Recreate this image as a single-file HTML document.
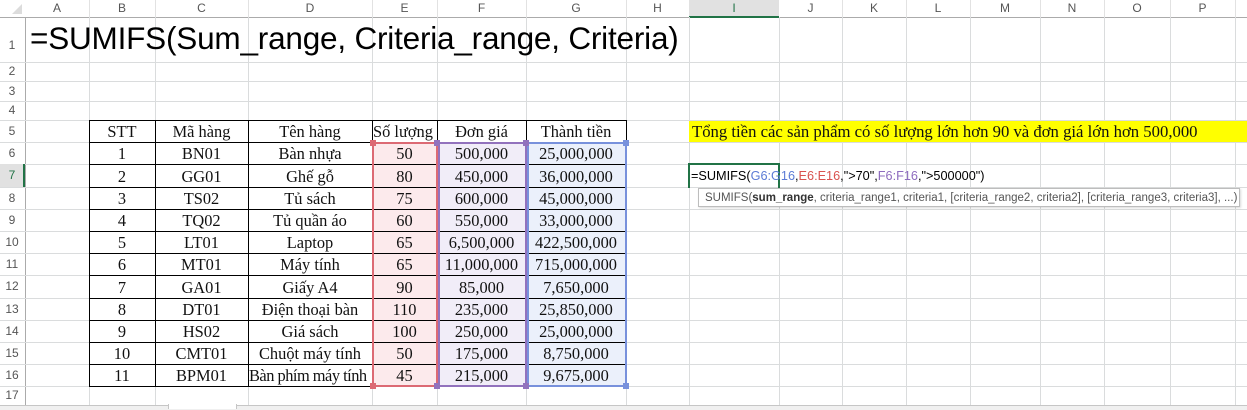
<!DOCTYPE html>
<html><head><meta charset="utf-8"><style>
body{margin:0;width:1247px;height:409px;overflow:hidden;background:#fff;position:relative;font-family:"Liberation Sans",sans-serif}
.v{position:absolute;top:17px;height:388px;width:1px;background:#dadcdd}
.h{position:absolute;left:0;width:1247px;height:1px;background:#dadcdd}
.ch{position:absolute;top:0;height:17px;line-height:17px;text-align:center;font-size:12px;color:#555}
.rh{position:absolute;left:0;width:24px;text-align:center;font-size:12px;color:#555}
.c{position:absolute;text-align:center;font-family:"Liberation Serif",serif;font-size:16.4px;color:#111;white-space:nowrap;overflow:hidden}
.box{position:absolute;box-sizing:border-box}
.hd{position:absolute;width:6px;height:6px}
</style></head><body>
<div style="position:absolute;left:0;top:0;width:1247px;height:17px;background:#fff;border-bottom:1px solid #ababab"></div>
<div style="position:absolute;left:689px;top:0;width:90px;height:16px;background:#e1e1e1;border-bottom:2px solid #217346"></div>
<svg style="position:absolute;left:12px;top:4px" width="11" height="11"><polygon points="10,0 10,10 0,10" fill="#dcdcdc"/></svg>
<div class="v" style="left:25px;background:#ababab"></div>
<div class="v" style="left:89px"></div><div class="v" style="left:155px"></div><div class="v" style="left:248px"></div><div class="v" style="left:372px"></div><div class="v" style="left:437px"></div><div class="v" style="left:526px"></div><div class="v" style="left:626px"></div><div class="v" style="left:689px"></div><div class="v" style="left:779px"></div><div class="v" style="left:842px"></div><div class="v" style="left:906px"></div><div class="v" style="left:970px"></div><div class="v" style="left:1040px"></div><div class="v" style="left:1104px"></div><div class="v" style="left:1170px"></div><div class="v" style="left:1235px"></div>
<div style="position:absolute;top:0;height:17px;left:89px;width:1px;background:#e2e2e2"></div>
<div style="position:absolute;top:0;height:17px;left:155px;width:1px;background:#e2e2e2"></div>
<div style="position:absolute;top:0;height:17px;left:248px;width:1px;background:#e2e2e2"></div>
<div style="position:absolute;top:0;height:17px;left:372px;width:1px;background:#e2e2e2"></div>
<div style="position:absolute;top:0;height:17px;left:437px;width:1px;background:#e2e2e2"></div>
<div style="position:absolute;top:0;height:17px;left:526px;width:1px;background:#e2e2e2"></div>
<div style="position:absolute;top:0;height:17px;left:626px;width:1px;background:#e2e2e2"></div>
<div style="position:absolute;top:0;height:17px;left:842px;width:1px;background:#e2e2e2"></div>
<div style="position:absolute;top:0;height:17px;left:906px;width:1px;background:#e2e2e2"></div>
<div style="position:absolute;top:0;height:17px;left:970px;width:1px;background:#e2e2e2"></div>
<div style="position:absolute;top:0;height:17px;left:1040px;width:1px;background:#e2e2e2"></div>
<div style="position:absolute;top:0;height:17px;left:1104px;width:1px;background:#e2e2e2"></div>
<div style="position:absolute;top:0;height:17px;left:1170px;width:1px;background:#e2e2e2"></div>
<div style="position:absolute;top:0;height:17px;left:1235px;width:1px;background:#e2e2e2"></div>
<div class="h" style="top:62px"></div><div class="h" style="top:81px"></div><div class="h" style="top:101px"></div><div class="h" style="top:120px"></div><div class="h" style="top:142px"></div><div class="h" style="top:164px"></div><div class="h" style="top:187px"></div><div class="h" style="top:209px"></div><div class="h" style="top:231px"></div><div class="h" style="top:253px"></div><div class="h" style="top:275px"></div><div class="h" style="top:298px"></div><div class="h" style="top:320px"></div><div class="h" style="top:342px"></div><div class="h" style="top:364px"></div><div class="h" style="top:386px"></div>
<div class="ch" style="left:25px;width:64px">A</div><div class="ch" style="left:89px;width:66px">B</div><div class="ch" style="left:155px;width:93px">C</div><div class="ch" style="left:248px;width:124px">D</div><div class="ch" style="left:372px;width:65px">E</div><div class="ch" style="left:437px;width:89px">F</div><div class="ch" style="left:526px;width:100px">G</div><div class="ch" style="left:626px;width:63px">H</div><div class="ch" style="left:689px;width:90px;color:#217346">I</div><div class="ch" style="left:779px;width:63px">J</div><div class="ch" style="left:842px;width:64px">K</div><div class="ch" style="left:906px;width:64px">L</div><div class="ch" style="left:970px;width:70px">M</div><div class="ch" style="left:1040px;width:64px">N</div><div class="ch" style="left:1104px;width:66px">O</div><div class="ch" style="left:1170px;width:65px">P</div>
<div class="rh" style="top:17px;height:45px;line-height:56px">1</div>
<div class="rh" style="top:62px;line-height:19px">2</div>
<div class="rh" style="top:81px;line-height:20px">3</div>
<div class="rh" style="top:101px;line-height:19px">4</div>
<div class="rh" style="top:120px;line-height:22px">5</div>
<div class="rh" style="top:142px;line-height:22px">6</div>
<div style="position:absolute;left:0;top:164px;width:25px;height:23px;background:#e1e1e1;border-right:2px solid #217346;box-sizing:border-box"></div>
<div class="rh" style="top:164px;line-height:23px;color:#217346">7</div>
<div class="rh" style="top:187px;line-height:22px">8</div>
<div class="rh" style="top:209px;line-height:22px">9</div>
<div class="rh" style="top:231px;line-height:22px">10</div>
<div class="rh" style="top:253px;line-height:22px">11</div>
<div class="rh" style="top:275px;line-height:23px">12</div>
<div class="rh" style="top:298px;line-height:22px">13</div>
<div class="rh" style="top:320px;line-height:22px">14</div>
<div class="rh" style="top:342px;line-height:22px">15</div>
<div class="rh" style="top:364px;line-height:22px">16</div>
<div class="rh" style="top:386px;line-height:19px">17</div>
<div style="position:absolute;left:30px;top:20px;font-size:31.5px;color:#000;white-space:nowrap;letter-spacing:-0.2px">=SUMIFS(Sum_range, Criteria_range, Criteria)</div>
<div class="box" style="left:372px;top:142px;width:66px;height:245px;background:#fceaec;border:2px solid #dc6a74"></div>
<div class="box" style="left:437px;top:142px;width:90px;height:245px;background:#f1edf8;border:2px solid #9272bd"></div>
<div class="box" style="left:526px;top:142px;width:101px;height:245px;background:#ebf0fb;border:2px solid #7891dc"></div>
<div style="position:absolute;left:89px;top:120px;width:538px;height:1px;background:#000"></div>
<div style="position:absolute;left:89px;top:142px;width:538px;height:1px;background:#000"></div>
<div style="position:absolute;left:89px;top:164px;width:538px;height:1px;background:#000"></div>
<div style="position:absolute;left:89px;top:187px;width:538px;height:1px;background:#000"></div>
<div style="position:absolute;left:89px;top:209px;width:538px;height:1px;background:#000"></div>
<div style="position:absolute;left:89px;top:231px;width:538px;height:1px;background:#000"></div>
<div style="position:absolute;left:89px;top:253px;width:538px;height:1px;background:#000"></div>
<div style="position:absolute;left:89px;top:275px;width:538px;height:1px;background:#000"></div>
<div style="position:absolute;left:89px;top:298px;width:538px;height:1px;background:#000"></div>
<div style="position:absolute;left:89px;top:320px;width:538px;height:1px;background:#000"></div>
<div style="position:absolute;left:89px;top:342px;width:538px;height:1px;background:#000"></div>
<div style="position:absolute;left:89px;top:364px;width:538px;height:1px;background:#000"></div>
<div style="position:absolute;left:89px;top:386px;width:538px;height:1px;background:#000"></div>
<div style="position:absolute;left:89px;top:120px;width:1px;height:267px;background:#000"></div>
<div style="position:absolute;left:155px;top:120px;width:1px;height:267px;background:#000"></div>
<div style="position:absolute;left:248px;top:120px;width:1px;height:267px;background:#000"></div>
<div style="position:absolute;left:372px;top:120px;width:1px;height:23px;background:#000"></div>
<div style="position:absolute;left:437px;top:120px;width:1px;height:23px;background:#000"></div>
<div style="position:absolute;left:526px;top:120px;width:1px;height:23px;background:#000"></div>
<div style="position:absolute;left:626px;top:120px;width:1px;height:23px;background:#000"></div>
<div style="position:absolute;left:372px;top:142px;width:2px;height:245px;background:#dc6a74"></div>
<div style="position:absolute;left:436px;top:142px;width:2px;height:245px;background:#dc6a74"></div>
<div style="position:absolute;left:438px;top:142px;width:2px;height:245px;background:#9272bd"></div>
<div style="position:absolute;left:525px;top:142px;width:2px;height:245px;background:#9272bd"></div>
<div style="position:absolute;left:527px;top:142px;width:2px;height:245px;background:#7891dc"></div>
<div style="position:absolute;left:625px;top:142px;width:2px;height:245px;background:#7891dc"></div>
<div style="position:absolute;left:372px;top:142px;width:66px;height:2px;background:#dc6a74"></div>
<div style="position:absolute;left:372px;top:385px;width:66px;height:2px;background:#dc6a74"></div>
<div style="position:absolute;left:438px;top:142px;width:88px;height:2px;background:#9272bd"></div>
<div style="position:absolute;left:438px;top:385px;width:88px;height:2px;background:#9272bd"></div>
<div style="position:absolute;left:527px;top:142px;width:100px;height:2px;background:#7891dc"></div>
<div style="position:absolute;left:527px;top:385px;width:100px;height:2px;background:#7891dc"></div>
<div class="hd" style="left:370px;top:140px;background:#dc6a74"></div><div class="hd" style="left:434px;top:140px;background:#9272bd"></div><div class="hd" style="left:523px;top:140px;background:#9272bd"></div><div class="hd" style="left:623px;top:140px;background:#7891dc"></div>
<div class="hd" style="left:370px;top:383px;background:#dc6a74"></div><div class="hd" style="left:434px;top:383px;background:#9272bd"></div><div class="hd" style="left:523px;top:383px;background:#9272bd"></div><div class="hd" style="left:623px;top:383px;background:#7891dc"></div>
<div class="c" style="left:89px;top:120px;width:66px;line-height:24px">STT</div>
<div class="c" style="left:155px;top:120px;width:93px;line-height:24px">Mã hàng</div>
<div class="c" style="left:248px;top:120px;width:124px;line-height:24px">Tên hàng</div>
<div class="c" style="left:373px;top:120px;width:64px;line-height:24px;text-align:left">Số lượng</div>
<div class="c" style="left:437px;top:120px;width:89px;line-height:24px">Đơn giá</div>
<div class="c" style="left:526px;top:120px;width:100px;line-height:24px">Thành tiền</div>

<div class="c" style="left:89px;top:142px;width:66px;line-height:24px">1</div><div class="c" style="left:155px;top:142px;width:93px;line-height:24px">BN01</div><div class="c" style="left:248px;top:142px;width:124px;line-height:24px">Bàn nhựa</div><div class="c" style="left:372px;top:142px;width:65px;line-height:24px">50</div><div class="c" style="left:437px;top:142px;width:89px;line-height:24px">500,000</div><div class="c" style="left:526px;top:142px;width:100px;line-height:24px">25,000,000</div>
<div class="c" style="left:89px;top:164px;width:66px;line-height:25px">2</div><div class="c" style="left:155px;top:164px;width:93px;line-height:25px">GG01</div><div class="c" style="left:248px;top:164px;width:124px;line-height:25px">Ghế gỗ</div><div class="c" style="left:372px;top:164px;width:65px;line-height:25px">80</div><div class="c" style="left:437px;top:164px;width:89px;line-height:25px">450,000</div><div class="c" style="left:526px;top:164px;width:100px;line-height:25px">36,000,000</div>
<div class="c" style="left:89px;top:187px;width:66px;line-height:24px">3</div><div class="c" style="left:155px;top:187px;width:93px;line-height:24px">TS02</div><div class="c" style="left:248px;top:187px;width:124px;line-height:24px">Tủ sách</div><div class="c" style="left:372px;top:187px;width:65px;line-height:24px">75</div><div class="c" style="left:437px;top:187px;width:89px;line-height:24px">600,000</div><div class="c" style="left:526px;top:187px;width:100px;line-height:24px">45,000,000</div>
<div class="c" style="left:89px;top:209px;width:66px;line-height:24px">4</div><div class="c" style="left:155px;top:209px;width:93px;line-height:24px">TQ02</div><div class="c" style="left:248px;top:209px;width:124px;line-height:24px">Tủ quần áo</div><div class="c" style="left:372px;top:209px;width:65px;line-height:24px">60</div><div class="c" style="left:437px;top:209px;width:89px;line-height:24px">550,000</div><div class="c" style="left:526px;top:209px;width:100px;line-height:24px">33,000,000</div>
<div class="c" style="left:89px;top:231px;width:66px;line-height:24px">5</div><div class="c" style="left:155px;top:231px;width:93px;line-height:24px">LT01</div><div class="c" style="left:248px;top:231px;width:124px;line-height:24px">Laptop</div><div class="c" style="left:372px;top:231px;width:65px;line-height:24px">65</div><div class="c" style="left:437px;top:231px;width:89px;line-height:24px">6,500,000</div><div class="c" style="left:526px;top:231px;width:100px;line-height:24px">422,500,000</div>
<div class="c" style="left:89px;top:253px;width:66px;line-height:24px">6</div><div class="c" style="left:155px;top:253px;width:93px;line-height:24px">MT01</div><div class="c" style="left:248px;top:253px;width:124px;line-height:24px">Máy tính</div><div class="c" style="left:372px;top:253px;width:65px;line-height:24px">65</div><div class="c" style="left:437px;top:253px;width:89px;line-height:24px">11,000,000</div><div class="c" style="left:526px;top:253px;width:100px;line-height:24px">715,000,000</div>
<div class="c" style="left:89px;top:275px;width:66px;line-height:25px">7</div><div class="c" style="left:155px;top:275px;width:93px;line-height:25px">GA01</div><div class="c" style="left:248px;top:275px;width:124px;line-height:25px">Giấy A4</div><div class="c" style="left:372px;top:275px;width:65px;line-height:25px">90</div><div class="c" style="left:437px;top:275px;width:89px;line-height:25px">85,000</div><div class="c" style="left:526px;top:275px;width:100px;line-height:25px">7,650,000</div>
<div class="c" style="left:89px;top:298px;width:66px;line-height:24px">8</div><div class="c" style="left:155px;top:298px;width:93px;line-height:24px">DT01</div><div class="c" style="left:248px;top:298px;width:124px;line-height:24px">Điện thoại bàn</div><div class="c" style="left:372px;top:298px;width:65px;line-height:24px">110</div><div class="c" style="left:437px;top:298px;width:89px;line-height:24px">235,000</div><div class="c" style="left:526px;top:298px;width:100px;line-height:24px">25,850,000</div>
<div class="c" style="left:89px;top:320px;width:66px;line-height:24px">9</div><div class="c" style="left:155px;top:320px;width:93px;line-height:24px">HS02</div><div class="c" style="left:248px;top:320px;width:124px;line-height:24px">Giá sách</div><div class="c" style="left:372px;top:320px;width:65px;line-height:24px">100</div><div class="c" style="left:437px;top:320px;width:89px;line-height:24px">250,000</div><div class="c" style="left:526px;top:320px;width:100px;line-height:24px">25,000,000</div>
<div class="c" style="left:89px;top:342px;width:66px;line-height:24px">10</div><div class="c" style="left:155px;top:342px;width:93px;line-height:24px">CMT01</div><div class="c" style="left:248px;top:342px;width:124px;line-height:24px">Chuột máy tính</div><div class="c" style="left:372px;top:342px;width:65px;line-height:24px">50</div><div class="c" style="left:437px;top:342px;width:89px;line-height:24px">175,000</div><div class="c" style="left:526px;top:342px;width:100px;line-height:24px">8,750,000</div>
<div class="c" style="left:89px;top:364px;width:66px;line-height:24px">11</div><div class="c" style="left:155px;top:364px;width:93px;line-height:24px">BPM01</div><div class="c" style="left:249px;top:364px;width:123px;line-height:24px;text-align:left;letter-spacing:-0.5px">Bàn phím máy tính</div><div class="c" style="left:372px;top:364px;width:65px;line-height:24px">45</div><div class="c" style="left:437px;top:364px;width:89px;line-height:24px">215,000</div><div class="c" style="left:526px;top:364px;width:100px;line-height:24px">9,675,000</div>
<div style="position:absolute;left:689px;top:121px;width:558px;height:21px;background:#ffff00"></div>
<div class="c" style="left:692px;top:120px;width:555px;line-height:24px;text-align:left;font-size:16.7px">Tổng tiền các sản phẩm có số lượng lớn hơn 90 và đơn giá lớn hơn 500,000</div>
<div class="box" style="left:688px;top:163px;width:92px;height:25px;border:2px solid #217346;border-bottom:none"></div>
<div style="position:absolute;left:691px;top:164px;line-height:24px;font-size:12.7px;white-space:nowrap;color:#000">=SUMIFS(<span style="color:#5b7bd5">G6:G16</span>,<span style="color:#d9534f">E6:E16</span>,"&gt;70",<span style="color:#8e6cbf">F6:F16</span>,"&gt;500000")</div>
<div style="position:absolute;left:698px;top:188px;width:542px;height:19px;background:#fff;border:1px solid #bdbdbd;box-shadow:1px 1px 2px rgba(0,0,0,0.15);font-size:11.5px;line-height:19px;color:#555;white-space:nowrap;padding-left:6px;box-sizing:border-box">SUMIFS(<b style="color:#333">sum_range</b>, criteria_range1, criteria1, [criteria_range2, criteria2], [criteria_range3, criteria3], ...)</div>
<div style="position:absolute;left:0;top:405px;width:1247px;height:4px;background:#f0f0f0;border-top:1px solid #c6c6c6"></div>
<div style="position:absolute;left:168px;top:404px;width:67px;height:5px;background:#fff;border-left:1px solid #c6c6c6;border-right:1px solid #c6c6c6"></div>
</body></html>
